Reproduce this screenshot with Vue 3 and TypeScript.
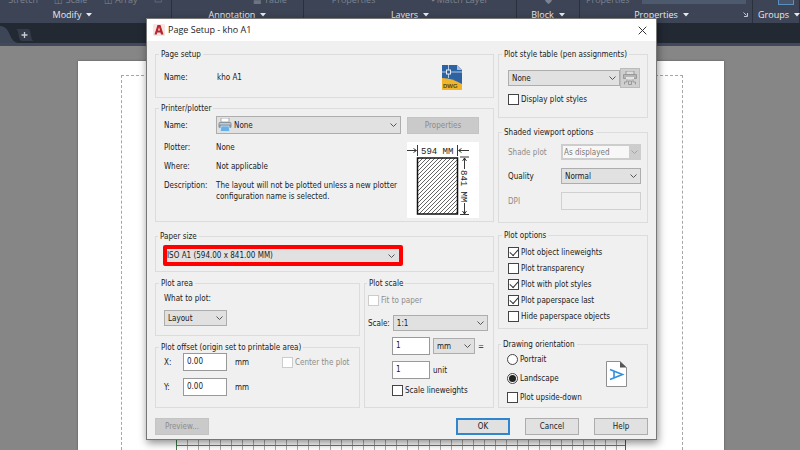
<script setup lang="ts">
import { reactive } from 'vue'

interface Panel { name: string; tools: string[] }
interface PlotOption { id: string; label: string; on: boolean }

const panels: Panel[] = [
  { name: 'Modify', tools: ['Stretch', '◫ Scale', '◫ Array', '▭'] },
  { name: 'Annotation', tools: ['', '', '▦ Table'] },
  { name: 'Layers', tools: ['Properties', '▪ Match Layer'] },
  { name: 'Block', tools: ['◆'] },
  { name: 'Properties', tools: ['Properties'] },
  { name: 'Groups', tools: [] },
]

const options = reactive<PlotOption[]>([
  { id: 'lw', label: 'Plot object lineweights', on: true },
  { id: 'tr', label: 'Plot transparency', on: false },
  { id: 'ps', label: 'Plot with plot styles', on: true },
  { id: 'pl', label: 'Plot paperspace last', on: true },
  { id: 'hp', label: 'Hide paperspace objects', on: false },
])

const form = reactive({
  x: '0.00',
  y: '0.00',
  paper: '1',
  drawing: '1',
  scaleLw: false,
  displayStyles: false,
  orientation: 'landscape',
  upsideDown: false,
})
</script>

<template>
  <div class="app">
    <header class="ribbon">
      <section v-for="p in panels" :key="p.name" class="panel" :class="p.name.toLowerCase()">
        <div class="tools">
          <span v-for="(t, i) in p.tools" :key="i">{{ t }}</span>
          <i v-if="p.name === 'Properties'" class="combo"></i>
          <i v-if="p.name === 'Groups'" class="active-tool"></i>
        </div>
        <button class="panel-name" type="button">
          {{ p.name }}
          <svg width="6" height="4" viewBox="0 0 6 4"><path d="M0 0h6L3 3.5z" fill="#e6e9ee" /></svg>
        </button>
        <svg v-if="p.name === 'Properties'" class="launcher" width="5" height="5" viewBox="0 0 5 5"><path d="M.5 .5l3 3M4.500 1v3.500H1" fill="none" stroke="#c3c8d0" /></svg>
      </section>
    </header>

    <nav class="tabs">
      <svg class="tab-edge" width="20" height="20" viewBox="0 0 20 20"><path d="M0 3C11 3 8 18 18 20H0z" fill="#3d4656" /></svg>
      <button class="new-tab" type="button" aria-label="New drawing">
        <svg width="20" height="14" viewBox="0 0 20 14">
          <path d="M1 1h12c4 0 2 12 6 12H7C3 13 4 1 1 1z" fill="#343c49" />
          <path d="M9.500 4v6M6.500 7h6" stroke="#c9cdd3" stroke-width="1.300" />
        </svg>
      </button>
    </nav>

    <main class="canvas">
      <div class="paper">
        <div class="margins"><div class="drawing"></div></div>
      </div>
    </main>

    <div class="dialog" role="dialog" aria-labelledby="title">
      <div class="title-bar">
        <svg width="12" height="12" viewBox="0 0 12 12">
          <rect width="12" height="12" rx="1" fill="#f7e4e3" />
          <path d="M1.500 10.500L4.500 1h3l3 9.500H8L7.400 8.400H4.300L3.700 10.500zM5 6.500h2L6 3.200z" fill="#b3272d" fill-rule="evenodd" />
        </svg>
        <h1 id="title">Page Setup - kho A1</h1>
        <button class="close" type="button" aria-label="Close">
          <svg width="9" height="9" viewBox="0 0 9 9"><path d="M.7 .7l7.600 7.600M8.300 .7L.7 8.300" stroke="#333" fill="none" /></svg>
        </button>
      </div>

      <div class="body">
        <div class="left">
          <fieldset class="setup">
            <legend>Page setup</legend>
            <span class="name">Name:</span>
            <span>kho A1</span>
            <svg class="dwg" width="20" height="25" viewBox="0 0 20 25">
              <path d="M0 0h15l5 5v20H0z" fill="#2d62a3" />
              <path d="M15 0l5 5h-5z" fill="#a9bfda" />
              <path d="M0 13c7 0 13 2 20 6v6H0z" fill="#f0b52b" />
              <path d="M6.500 0v13M0 7h20" stroke="#b5cbe6" fill="none" />
              <rect x="4.500" y="5" width="4" height="4" fill="#2d62a3" stroke="#e4edf7" />
              <text x="1" y="23" font-size="6" font-family="Liberation Sans, sans-serif" font-weight="bold" fill="#5c4715">DWG</text>
            </svg>
          </fieldset>

          <fieldset class="printer">
            <legend>Printer/plotter</legend>
            <label for="plotter">Name:</label>
            <span class="select with-icon">
              <select id="plotter"><option>None</option></select>
              <svg class="lead" width="14" height="14" viewBox="0 0 14 14">
                <path d="M3 0h8v4H3z" fill="#fff" stroke="#8a8f96" stroke-width=".7" />
                <rect x=".5" y="4" width="13" height="6" rx="1.500" fill="#8b929b" />
                <rect x="1.500" y="5" width="11" height="1.500" fill="#c5cad0" />
                <path d="M3 8h8l.8 5.500H2.200z" fill="#67b1e8" stroke="#e8f2fa" stroke-width=".6" />
              </svg>
              <svg class="chevron" width="7" height="4" viewBox="0 0 7 4"><path d="M.5 .5l3 3 3-3" /></svg>
            </span>
            <button class="btn" type="button" disabled>Properties</button>
            <dl>
              <dt>Plotter:</dt><dd>None</dd>
              <dt>Where:</dt><dd>Not applicable</dd>
              <dt>Description:</dt><dd>The layout will not be plotted unless a new plotter<br>configuration name is selected.</dd>
            </dl>
            <svg class="preview" width="72" height="76" viewBox="0 0 72 76">
              <defs>
                <pattern id="hatch" width="4" height="4" patternUnits="userSpaceOnUse">
                  <path d="M-1 5L5 -1M-1 1L1 -1M3 5L5 3" stroke="#222" stroke-width=".7" />
                </pattern>
              </defs>
              <rect width="72" height="76" fill="#fff" />
              <rect x="10.500" y="16" width="40" height="56" fill="url(#hatch)" stroke="#111" stroke-width="1.500" />
              <g stroke="#222" stroke-width=".9" fill="none">
                <path d="M10.500 3v11M50.500 3v11M0 8.500h9M6.500 6.500l3 2-3 2M62 8.500H52M54.500 6.500l-3 2 3 2" />
                <path d="M53 15h9M53 72.500h9M57.500 16v11M55.500 19l2-3 2 3M57.500 61v11M55.500 69l2 3 2-3" />
              </g>
              <text x="14" y="12" class="dim">594 MM</text>
              <text x="28" y="-54" class="dim" transform="rotate(90)">841 MM</text>
            </svg>
          </fieldset>

          <fieldset class="paper-size">
            <legend>Paper size</legend>
            <span class="select marked">
              <select aria-label="Paper size"><option>ISO A1 (594.00 x 841.00 MM)</option></select>
              <svg class="chevron" width="7" height="4" viewBox="0 0 7 4"><path d="M.5 .5l3 3 3-3" /></svg>
            </span>
          </fieldset>

          <div class="lower">
            <div class="stack">
              <fieldset class="area">
                <legend>Plot area</legend>
                <label for="what">What to plot:</label>
                <span class="select">
                  <select id="what"><option>Layout</option></select>
                  <svg class="chevron" width="7" height="4" viewBox="0 0 7 4"><path d="M.5 .5l3 3 3-3" /></svg>
                </span>
              </fieldset>
              <fieldset class="offset">
                <legend>Plot offset (origin set to printable area)</legend>
                <div class="line">
                  <label for="ox">X:</label>
                  <input id="ox" v-model="form.x" class="field" type="text">
                  <span>mm</span>
                  <label class="check off"><input type="checkbox" disabled>Center the plot</label>
                </div>
                <div class="line">
                  <label for="oy">Y:</label>
                  <input id="oy" v-model="form.y" class="field" type="text">
                  <span>mm</span>
                </div>
              </fieldset>
            </div>

            <fieldset class="scale">
              <legend>Plot scale</legend>
              <label class="check off fit"><input type="checkbox" disabled>Fit to paper</label>
              <div class="line ratio">
                <label for="sc">Scale:</label>
                <span class="select">
                  <select id="sc"><option>1:1</option></select>
                  <svg class="chevron" width="7" height="4" viewBox="0 0 7 4"><path d="M.5 .5l3 3 3-3" /></svg>
                </span>
              </div>
              <div class="line units">
                <input v-model="form.paper" class="field" type="text" aria-label="Paper units">
                <span class="select">
                  <select aria-label="Unit"><option>mm</option></select>
                  <svg class="chevron" width="7" height="4" viewBox="0 0 7 4"><path d="M.5 .5l3 3 3-3" /></svg>
                </span>
                <span>=</span>
              </div>
              <div class="line units">
                <input id="du" v-model="form.drawing" class="field" type="text">
                <label for="du">unit</label>
              </div>
              <label class="check lw"><input v-model="form.scaleLw" type="checkbox">Scale lineweights</label>
            </fieldset>
          </div>
        </div>

        <div class="right">
          <fieldset class="styles">
            <legend>Plot style table (pen assignments)</legend>
            <div class="line">
              <span class="select">
                <select aria-label="Plot style table"><option>None</option></select>
                <svg class="chevron" width="7" height="4" viewBox="0 0 7 4"><path d="M.5 .5l3 3 3-3" /></svg>
              </span>
              <button class="edit" type="button" disabled aria-label="Edit plot style">
                <svg width="14" height="14" viewBox="0 0 14 14">
                  <path d="M3 0h8v4H3z" fill="#ddd" stroke="#999" />
                  <path d="M.5 3.500h13v4H.5z" fill="#b5b5b5" stroke="#999" />
                  <path d="M3 6h8v2H3z" fill="#e4e4e4" />
                  <path d="M4 8.500v2.500H1.500v2.500M10 8.500v2.500h2.500v2.500M5.500 10h3v3.500h-3z" fill="none" stroke="#999" />
                </svg>
              </button>
            </div>
            <label class="check"><input v-model="form.displayStyles" type="checkbox">Display plot styles</label>
          </fieldset>

          <fieldset class="shaded">
            <legend>Shaded viewport options</legend>
            <label for="shade" class="off">Shade plot</label>
            <span class="select disabled">
              <select id="shade" disabled><option>As displayed</option></select>
              <svg class="chevron" width="7" height="4" viewBox="0 0 7 4"><path d="M.5 .5l3 3 3-3" /></svg>
            </span>
            <label for="quality">Quality</label>
            <span class="select">
              <select id="quality"><option>Normal</option></select>
              <svg class="chevron" width="7" height="4" viewBox="0 0 7 4"><path d="M.5 .5l3 3 3-3" /></svg>
            </span>
            <label for="dpi" class="off">DPI</label>
            <input id="dpi" class="field" type="text" disabled>
          </fieldset>

          <fieldset class="options">
            <legend>Plot options</legend>
            <label v-for="o in options" :key="o.id" class="check"><input v-model="o.on" type="checkbox">{{ o.label }}</label>
          </fieldset>

          <fieldset class="orientation">
            <legend>Drawing orientation</legend>
            <div class="choices">
              <label class="check"><input v-model="form.orientation" type="radio" name="orientation" value="portrait">Portrait</label>
              <label class="check"><input v-model="form.orientation" type="radio" name="orientation" value="landscape">Landscape</label>
              <label class="check"><input v-model="form.upsideDown" type="checkbox">Plot upside-down</label>
            </div>
            <svg width="21" height="26" viewBox="0 0 21 26">
              <path d="M.5 .5h13.500l6.500 6v19H.5z" fill="#fff" stroke="#8f8f8f" />
              <path d="M14 .5v6h6.500z" fill="#555" />
              <path d="M4 8.500l12.500 5L4 18.500M8 10.500v6" fill="none" stroke="#2f8fe0" stroke-width="1.600" />
            </svg>
          </fieldset>
        </div>
      </div>

      <div class="footer">
        <button class="btn preview-btn" type="button" disabled>Preview...</button>
        <button class="btn primary" type="button">OK</button>
        <button class="btn" type="button">Cancel</button>
        <button class="btn" type="button">Help</button>
      </div>
    </div>
  </div>
</template>

<style>
body { margin: 0; }
</style>

<style scoped>
* { box-sizing: border-box; }
.app {
  position: relative;
  display: flex;
  flex-direction: column;
  height: 100vh;
  min-height: 440px;
  overflow: hidden;
  font: 8px/11px "DejaVu Sans Condensed", "DejaVu Sans", sans-serif;
  font-stretch: condensed;
  color: #1a1a1a;
}
button, input, select { font: inherit; color: inherit; margin: 0; }
svg { display: block; flex: none; }

/* ribbon */
.ribbon {
  display: grid;
  grid-template-columns: 172fr 132fr 213fr 63fr 173fr 47fr;
  background: #3c4455;
  font: 9px/14px "Open Sans", "Noto Sans", sans-serif;
}
.panel {
  display: grid;
  grid-template: 5px 18px / minmax(0, 1fr) auto;
  align-items: center;
  min-width: 0;
  border-right: 1px solid #2a313e;
}
.tools {
  grid-column: 1 / -1;
  display: flex;
  justify-content: space-around;
  align-items: flex-end;
  height: 5px;
  overflow: hidden;
  color: #7b8392;
  line-height: 10px;
  white-space: nowrap;
}
.combo { width: 104px; height: 4px; margin-bottom: 1px; background: #4d596d; }
.active-tool { width: 16px; height: 5px; margin-left: 20px; border: 1px solid #5a8fc0; border-top: 0; background: #47566c; }
.panel-name {
  display: flex;
  align-items: center;
  justify-content: center;
  gap: 5px;
  padding: 2px 0 0;
  border: 0;
  background: none;
  color: #e6e9ee;
}
.modify .panel-name { padding-right: 26px; }
.groups .panel-name { padding-left: 6px; }
.launcher { margin-right: 4px; }

.tabs {
  display: flex;
  height: 23px;
  background: #222933;
  border-bottom: 3px solid #414a5a;
}
.tab-edge { margin-right: -5px; }
.new-tab { align-self: center; padding: 3px 0 0; border: 0; background: none; }

/* sheet */
.canvas { flex: 1; display: flex; padding: 15px 76px 0 78px; background: #868686; }
.paper { flex: 1; display: flex; padding: 14px 41px 0 43px; background: #fff; box-shadow: 0 0 2px #555; }
.margins { flex: 1; display: flex; align-items: flex-end; padding: 0 56px 0 54px; border: 1px dashed #a6a6a6; border-bottom: 0; }
.drawing {
  flex: 1;
  height: 40px;
  border: solid #555;
  border-width: 0 1px;
  border-left-color: #3d7a4c;
  background:
    linear-gradient(#b8545c, #b8545c) 0 35px / 100% 1px no-repeat,
    repeating-linear-gradient(90deg, transparent 0 10px, #aaa 10px 11px),
    #fff;
}

/* dialog */
.dialog {
  position: absolute;
  left: 146px;
  top: 18px;
  width: 511px;
  background: #f0f0f0;
  border: 1px solid #777;
  box-shadow: 1px 3px 8px rgba(0, 0, 0, 0.45);
}
.title-bar { display: flex; align-items: center; gap: 3px; height: 22px; padding: 0 9px 0 6px; background: #fff; }
h1 { flex: 1; margin: 0; font: 9px/14px "Open Sans", "Noto Sans", sans-serif; color: #222; }
.close { padding: 0; border: 0; background: none; }

.body { display: grid; grid-template-columns: 339px minmax(0, 1fr); gap: 4px; padding: 7px 8px 0; }
.left, .right, .stack { display: flex; flex-direction: column; }
.lower { display: grid; grid-template-columns: 205px minmax(0, 1fr); gap: 4px; margin-top: 5px; }

fieldset {
  min-width: 0;
  margin: 0;
  padding: 0 8px;
  border: 1px solid #dcdcdc;
}
legend { height: 12px; margin-left: -5px; padding: 0 2px; line-height: 13px; white-space: nowrap; }
.right legend { margin-left: -6px; }
label, span { white-space: nowrap; }
.off { color: #8c8c8c; }

.select { display: grid; align-items: center; min-width: 0; }
.select > * { grid-area: 1 / 1; }
select {
  appearance: none;
  width: 100%;
  height: 16px;
  padding: 0 12px 0 3px;
  border: 1px solid #adadad;
  border-radius: 0;
  background: #e1e1e1;
  opacity: 1;
}
.chevron { justify-self: end; margin-right: 4px; pointer-events: none; }
.chevron path { fill: none; stroke: #555; }
.lead { margin-left: 2px; pointer-events: none; }
.with-icon select { height: 18px; padding-left: 17px; }
.disabled select { color: #777; border: 2px solid #cdcdcd; border-right-width: 12px; background: #f7f7f7; padding: 0 0 0 1px; }
.disabled .chevron { margin-right: 3px; }
.disabled .chevron path { stroke: #a5a5a5; }

.field { width: 100%; height: 18px; padding: 0 3px 2px; border: 1px solid #999; border-radius: 0; background: #fff; }
.field:disabled { border-color: #d0d0d0; background: #f0f0f0; }

.check { display: flex; align-items: center; gap: 2px; }
.check input {
  appearance: none;
  display: grid;
  place-items: center;
  flex: none;
  width: 11px;
  height: 11px;
  border: 1px solid #444;
  background: #fff;
}
.check input:disabled { border-color: #ccc; }
.check input[type="checkbox"]:checked::before {
  content: "";
  width: 7px;
  height: 4px;
  margin-bottom: 2px;
  border: solid #333;
  border-width: 0 0 1px 1px;
  transform: rotate(-48deg);
}
.check input[type="radio"] { border-radius: 50%; }
.check input[type="radio"]:checked::before { content: ""; width: 7px; height: 7px; border-radius: 50%; background: #222; }

.line { display: flex; align-items: center; gap: 8px; }

.btn { height: 17px; padding: 0; border: 1px solid #adadad; background: #e1e1e1; text-align: center; }
.btn:disabled { border-color: #c4c4c4; background: #cacaca; color: #8c8c8c; }

/* left groups */
.setup { display: grid; grid-template-columns: 53px 1fr auto; align-items: center; height: 50px; padding-bottom: 3px; padding-top: 5px; }
.setup .dwg { margin-right: 23px; }
.printer {
  display: grid;
  grid-template-columns: 46px 185px 72px;
  gap: 8px 6px;
  align-items: center;
  height: 120px;
  margin-top: 4px;
  padding: 2px 14px 3px 8px;
}
dl { grid-column: 1 / 3; align-self: start; display: grid; grid-template-columns: 52px 1fr; row-gap: 8px; margin: 0; white-space: nowrap; }
dd { margin: 0; }
.dim { font: 9px "Liberation Mono", monospace; fill: #222; }
.paper-size { height: 42px; margin-top: 8px; padding: 3px 8px 0 7px; }
.marked { width: 240px; border: 4px solid #f00; border-radius: 2px; }
.marked select { height: 13px; padding-left: 0; border: 0; }
.area { height: 59px; padding-top: 4px; }
.area .select { width: 63px; margin-top: 6px; }
.offset { height: 67px; margin-top: 5px; }
.offset .line + .line { margin-top: 7px; }
.offset .line > label:first-child { flex: none; width: 11px; }
.offset .field { width: 44px; }
.offset .check { margin-left: 25px; }
.scale { height: 131px; padding: 6px 5px 0 3px; }
.scale legend { margin-left: -1px; }
.ratio { gap: 3px; margin-top: 9px; }
.ratio .select { flex: 1; }
.units { gap: 3px; margin: 6px 0 0 24px; }
.units .field { width: 38px; }
.units .select { width: 42px; }
.lw { margin: 6px 0 0 24px; }

/* right groups */
.styles { height: 70px; padding: 8px 7px 0 9px; }
.styles .line { gap: 0; }
.styles .select { flex: 1; }
.styles .edit { width: 20px; height: 20px; padding: 2px; border: 1px solid #bbb; background: #cfcfcf; }
.styles .check { margin-top: 6px; }
.shaded {
  display: grid;
  grid-template-columns: 45px 1fr;
  gap: 8px;
  align-items: center;
  align-content: start;
  height: 97px;
  margin-top: 8px;
  padding: 6px 6px 0 9px;
}
.options { display: grid; gap: 5px; align-content: start; height: 100px; margin-top: 6px; padding: 6px 6px 0 9px; }
.orientation { display: flex; justify-content: space-between; height: 70px; margin-top: 9px; padding: 4px 20px 0 8px; }
.choices { display: grid; gap: 8px; align-content: start; }
.orientation svg { margin-top: 7px; }

.footer { display: flex; gap: 15px; padding: 10px 8px 4px; }
.footer .btn { width: 54px; }
.preview-btn { margin-right: auto; }
.footer .primary { border: 2px solid #2f86cc; }
</style>
